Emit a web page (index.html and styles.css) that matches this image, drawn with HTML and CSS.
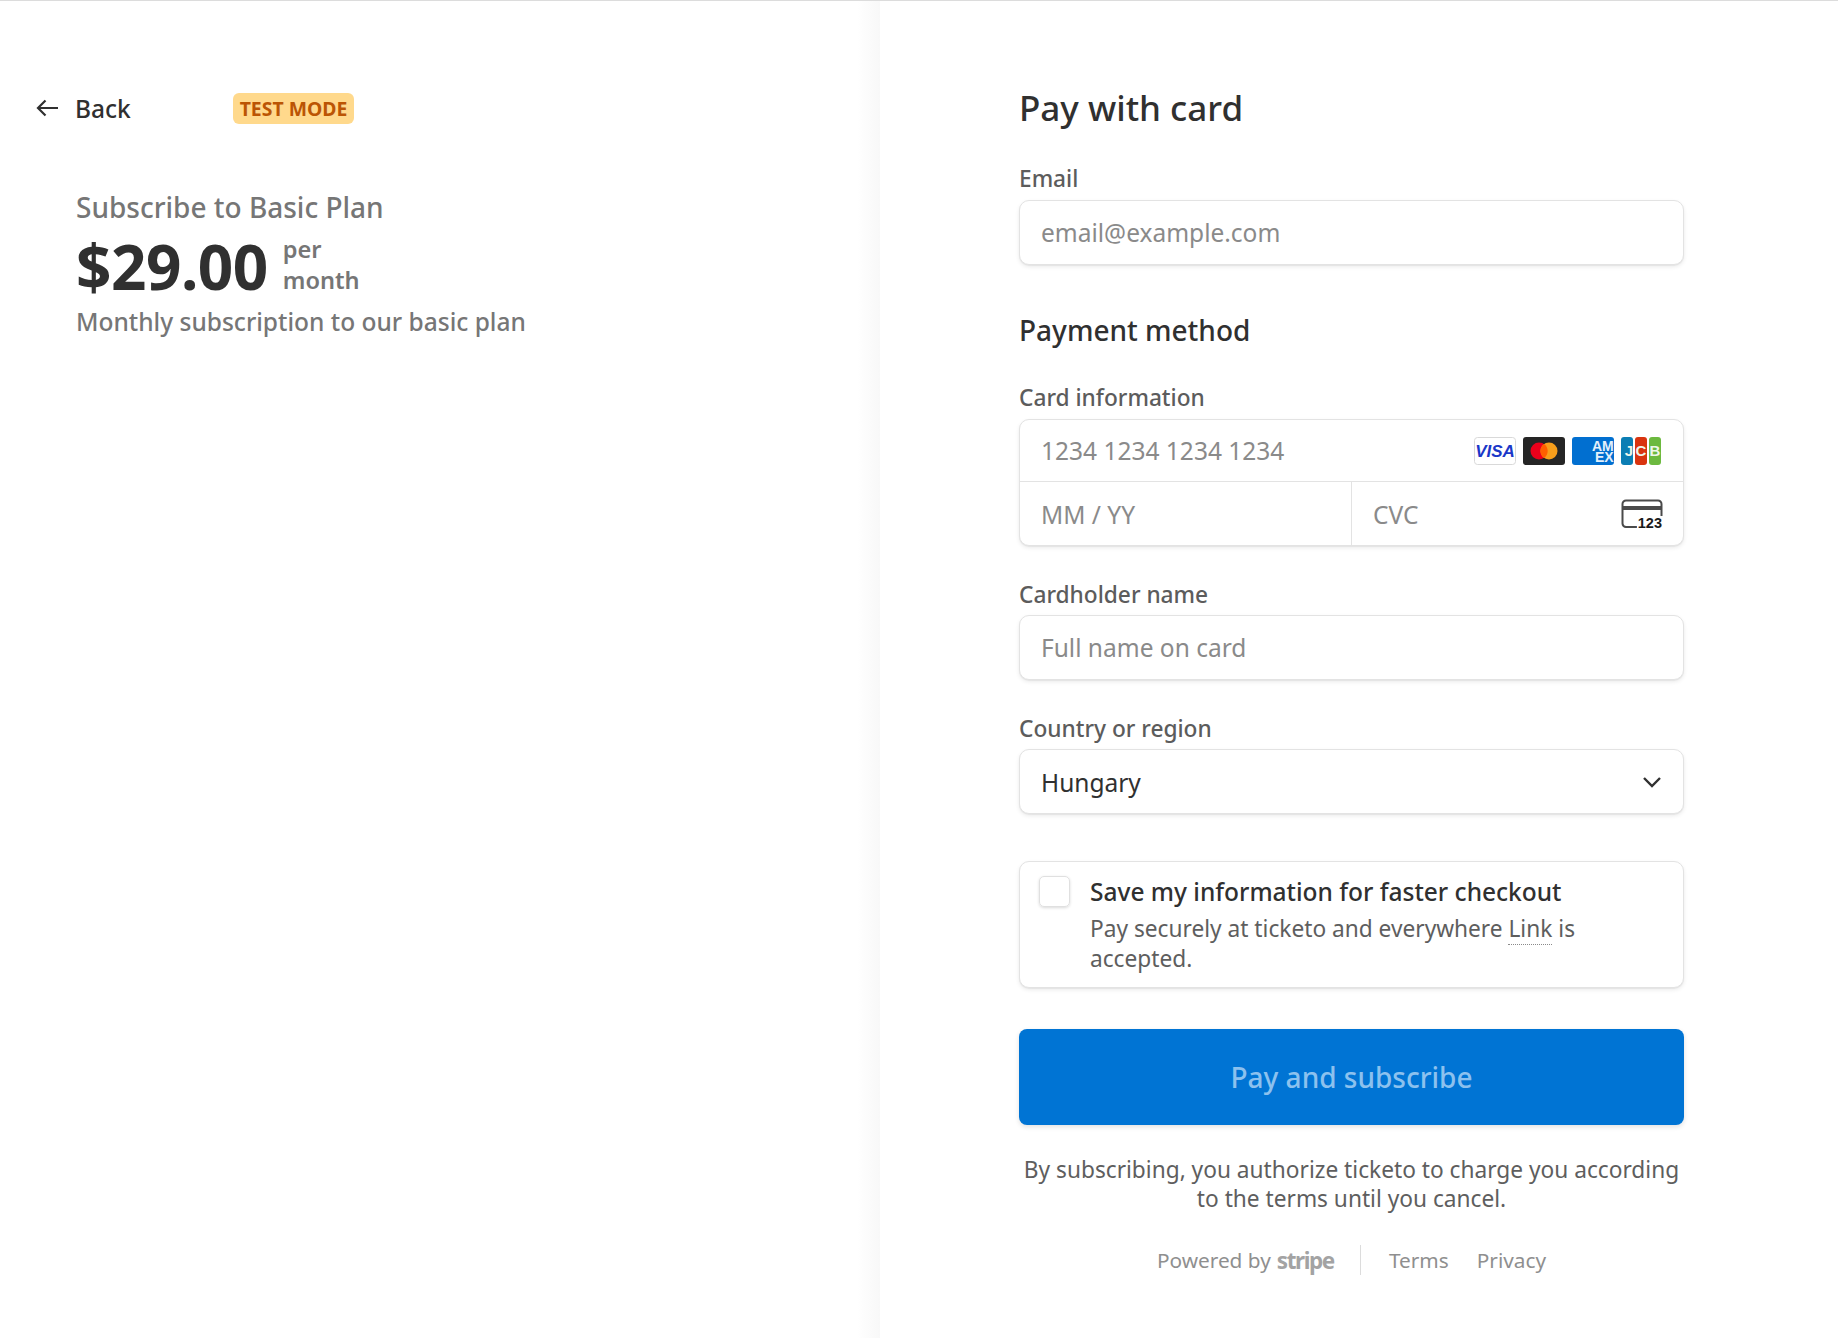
FILE: index.html
```html
<!DOCTYPE html>
<html lang="en">
<head>
    <meta charset="UTF-8">
    <title>Subscribe to Basic Plan</title>
    <link rel="stylesheet" href="styles.css">
</head>
<body>
    <div class="checkout">
        <div class="summary">
            <div class="summary-top">
                <a class="back" href="#">
                    <svg class="back-arrow" width="24" height="20" viewBox="0 0 24 20"><path d="M23 10H3M10.500 2.500L3 10l7.500 7.500" fill="none" stroke="#303030" stroke-width="2.200"/></svg>
                    <span>Back</span>
                </a>
                <span class="badge">TEST MODE</span>
            </div>
            <div class="product">
                <div class="product-name">Subscribe to Basic Plan</div>
                <div class="price-row">
                    <span class="price">$29.00</span>
                    <span class="period">per<br>month</span>
                </div>
                <div class="product-desc">Monthly subscription to our basic plan</div>
            </div>
        </div>

        <div class="pay">
            <div class="form">
                <h1>Pay with card</h1>

                <label class="label label-email">Email</label>
                <div class="box field"><span class="placeholder">email@example.com</span></div>

                <h2>Payment method</h2>

                <label class="label">Card information</label>
                <div class="box card-box">
                    <div class="card-row">
                        <span class="placeholder">1234 1234 1234 1234</span>
                        <div class="brands">
                            <svg width="42" height="28" viewBox="0 0 42 28"><rect x=".5" y=".5" width="41" height="27" rx="3" fill="#fff" stroke="#d9d9d9"/><text x="21" y="20" text-anchor="middle" class="visa">VISA</text></svg>
                            <svg width="42" height="28" viewBox="0 0 42 28"><rect width="42" height="28" rx="3" fill="#252525"/><circle cx="16" cy="14" r="8.500" fill="#eb001b"/><circle cx="26" cy="14" r="8.500" fill="#f79e1b"/><path d="M21 7a8.500 8.500 0 0 1 0 14 8.500 8.500 0 0 1 0-14z" fill="#ff5f00"/></svg>
                            <svg width="42" height="28" viewBox="0 0 42 28"><rect width="42" height="28" rx="3" fill="#016fd0"/><text x="20" y="14" class="amex">AM</text><text x="23" y="25" class="amex">EX</text></svg>
                            <svg width="40" height="28" viewBox="0 0 40 28"><rect width="12" height="28" rx="3" fill="#0b7eb4"/><rect x="14" width="12" height="28" rx="3" fill="#d9340f"/><rect x="28" width="12" height="28" rx="3" fill="#6cb93f"/><text x="8" y="19" text-anchor="middle" class="jcb">J</text><text x="20" y="19" text-anchor="middle" class="jcb">C</text><text x="34" y="19" text-anchor="middle" class="jcb">B</text></svg>
                        </div>
                    </div>
                    <div class="card-split">
                        <div class="card-cell"><span class="placeholder">MM / YY</span></div>
                        <div class="card-cell cvc">
                            <span class="placeholder">CVC</span>
                            <svg class="cvc-icon" width="42" height="30" viewBox="0 0 42 30"><path d="M16 28H5a3.500 3.500 0 0 1-3.500-3.500V5A3.500 3.500 0 0 1 5 1.500h32A3.500 3.500 0 0 1 40.500 5v12" fill="none" stroke="#4a4a4a" stroke-width="2"/><rect x="1" y="7" width="40" height="4" fill="#4a4a4a"/><text x="41" y="29" text-anchor="end" class="cvc-num">123</text></svg>
                        </div>
                    </div>
                </div>

                <label class="label label-name">Cardholder name</label>
                <div class="box field"><span class="placeholder">Full name on card</span></div>

                <label class="label label-country">Country or region</label>
                <div class="box field select">
                    <span class="value">Hungary</span>
                    <svg width="20" height="12" viewBox="0 0 20 12"><path d="M2 2l8 8 8-8" fill="none" stroke="#303030" stroke-width="2.400"/></svg>
                </div>

                <div class="box save">
                    <span class="check"></span>
                    <div class="save-text">
                        <div class="save-title">Save my information for faster checkout</div>
                        <div class="save-desc">Pay securely at ticketo and everywhere <span class="link">Link</span> is accepted.</div>
                    </div>
                </div>

                <button class="pay-button">Pay and subscribe</button>

                <p class="terms">By subscribing, you authorize ticketo to charge you according to the terms until you cancel.</p>

                <div class="footer">
                    <span class="powered">Powered by <b class="stripe">stripe</b></span>
                    <span class="divider"></span>
                    <a href="#">Terms</a>
                    <a href="#">Privacy</a>
                </div>
            </div>
        </div>
    </div>
</body>
</html>
```

FILE: styles.css
```css
* {
    box-sizing: border-box;
}
html, body {
    height: 100%;
}
body {
    margin: 0;
    font-family: "Noto Sans", sans-serif;
    background-color: white;
    color: #303030;
    overflow: hidden;
}
a {
    color: inherit;
    text-decoration: none;
}
.checkout {
    display: grid;
    grid-template-columns: 880px 1fr;
    height: 100%;
    border-top: 1px solid #dcdcdc;
}

/* left side */
.summary {
    padding: 91px 0 0 36px;
    background: linear-gradient(to right, white 857px, #f8f8f8 880px);
}
.summary-top {
    display: flex;
    align-items: center;
    height: 32px;
}
.back {
    display: flex;
    align-items: center;
    gap: 16px;
    width: 197px;
    font-size: 24.500px;
    font-weight: 500;
}
.back-arrow {
    margin-left: -1px;
}
.badge {
    width: 121px;
    height: 31px;
    line-height: 32px;
    text-align: center;
    border-radius: 6px;
    background-color: #ffd98c;
    color: #bb5504;
    font-size: 19.400px;
    font-weight: 700;
}
.product {
    margin: 63px 0 0 40px;
}
.product-name {
    font-size: 28px;
    line-height: 40px;
    font-weight: 500;
    color: #767676;
}
.price-row {
    display: flex;
    align-items: center;
    gap: 15px;
    height: 80px;
}
.price {
    margin-top: -2px;
    font-size: 62px;
    font-weight: 700;
    line-height: 80px;
    letter-spacing: -.5px;
}
.period {
    margin-top: -4px;
    font-size: 23.600px;
    line-height: 31px;
    font-weight: 600;
    color: #767676;
}
.product-desc {
    font-size: 24.500px;
    line-height: 30px;
    font-weight: 500;
    color: #767676;
}

/* right side */
.pay {
    padding: 84px 0 0 139px;
}
.form {
    width: 665px;
}
h1 {
    margin: 0;
    font-size: 35px;
    line-height: 46px;
    font-weight: 500;
}
h2 {
    margin: 46px 0 0;
    font-size: 28px;
    line-height: 38px;
    font-weight: 500;
}
.label {
    display: block;
    font-size: 22.700px;
    line-height: 32px;
    font-weight: 500;
    color: #5c5c5c;
    margin: 33px 0 5px;
}
.label-email {
    margin: 32px 0 5px;
}
.label-name {
    margin: 33px 0 4px;
}
.label-country {
    margin: 33px 0 4px;
}
.box {
    background-color: white;
    border: 1px solid #e3e3e3;
    border-radius: 10px;
    box-shadow: 0 2px 4px rgba(0, 0, 0, 0.08), 0 1px 1px rgba(0, 0, 0, 0.05);
}
.field {
    display: flex;
    align-items: center;
    height: 65px;
    padding: 0 21px;
}
.placeholder {
    font-size: 24.500px;
    color: #8a8a8a;
}
.card-box {
    height: 127px;
}
.card-row {
    display: flex;
    align-items: center;
    justify-content: space-between;
    height: 62px;
    padding: 0 22px 0 21px;
    border-bottom: 1px solid #e3e3e3;
}
.brands {
    display: flex;
    gap: 7px;
}
.visa {
    font: italic 700 17px "Liberation Sans", sans-serif;
    fill: #1a37c8;
}
.amex {
    font: 700 14px "Liberation Sans", sans-serif;
    fill: #e3f0fb;
}
.jcb {
    font: 700 15px "Liberation Sans", sans-serif;
    fill: #eef6ea;
}
.cvc-icon {
    overflow: visible;
}
.cvc-num {
    font: 700 14.500px "Liberation Sans", sans-serif;
    fill: #1a1a1a;
    stroke: white;
    stroke-width: 3px;
    paint-order: stroke;
}
.card-split {
    display: grid;
    grid-template-columns: 331px 1fr;
    height: 63px;
}
.card-cell {
    display: flex;
    align-items: center;
    justify-content: space-between;
    padding: 1px 21px 0;
}
.cvc {
    border-left: 1px solid #e3e3e3;
    padding: 1px 20px 0 21px;
}
.select {
    justify-content: space-between;
    padding: 0 21px;
}
.value {
    margin-top: 2px;
    font-size: 24.500px;
    color: #303030;
}
.save {
    display: flex;
    gap: 20px;
    height: 127px;
    margin-top: 47px;
    padding: 14px 20px 0 19px;
}
.check {
    flex: none;
    width: 31px;
    height: 31px;
    border: 1px solid #e0e0e0;
    border-radius: 5px;
    box-shadow: 0 1px 3px rgba(0, 0, 0, 0.15);
}
.save-text {
    margin-top: -1px;
}
.save-title {
    font-size: 24.500px;
    line-height: 34px;
    font-weight: 500;
}
.save-desc {
    margin-top: 5px;
    font-size: 22.700px;
    line-height: 30px;
    color: #5e5e5e;
}
.link {
    border-bottom: 1px dotted #8a8a8a;
}
.pay-button {
    display: block;
    width: 100%;
    height: 96px;
    margin-top: 41px;
    border: none;
    border-radius: 8px;
    background-color: #0074d4;
    box-shadow: 0 2px 5px rgba(0, 0, 0, 0.12);
    color: #8cc1ee;
    font-family: inherit;
    font-size: 28px;
    font-weight: 500;
}
.terms {
    margin: 30px 0 0;
    font-size: 22.700px;
    line-height: 29px;
    text-align: center;
    color: #5e5e5e;
}
.footer {
    display: flex;
    align-items: center;
    justify-content: center;
    height: 32px;
    margin-top: 31px;
    font-size: 20.800px;
    color: #8f8f8f;
}
.powered {
    display: flex;
    align-items: center;
    gap: 6px;
}
.stripe {
    font-size: 22.500px;
    font-weight: 700;
    color: #a3a3a3;
    letter-spacing: -1.400px;
}
.divider {
    width: 1px;
    height: 30px;
    margin: 0 28px 0 26px;
    background-color: #dcdcdc;
}
.footer a + a {
    margin-left: 28px;
}
```
